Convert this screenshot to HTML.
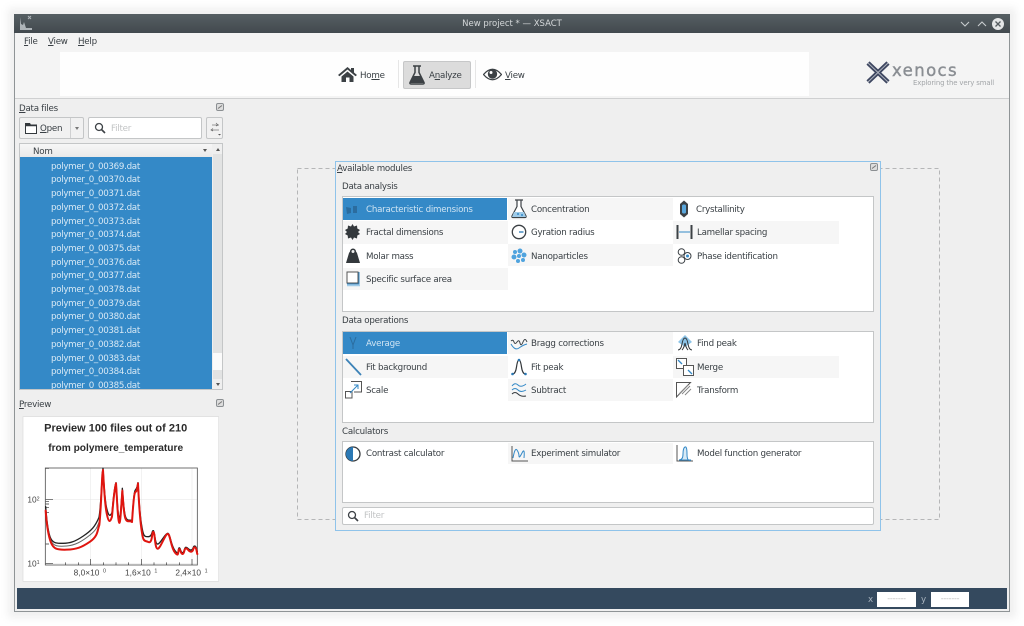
<!DOCTYPE html>
<html><head><meta charset="utf-8"><style>
html,body{margin:0;padding:0;background:#fff;width:1024px;height:626px;overflow:hidden}
#r{position:relative;width:1024px;height:626px;overflow:hidden;font-family:"DejaVu Sans",sans-serif;font-size:8.7px;letter-spacing:-.24px;color:#3a4045;filter:blur(.35px);background:#fff}
#r div,#r span.a,#r svg{position:absolute}
.t{white-space:nowrap;line-height:12px}
.row{background:#f6f6f6}
.sel{background:#3489c7}
.box{background:#fff;border:1px solid #c4c6c7;box-sizing:border-box}
.f{left:51px;color:#d8e9f5;white-space:nowrap;line-height:12px;letter-spacing:-.3px}
u{text-decoration-thickness:1px;text-underline-offset:1px}
</style></head><body><div id="r">
<div style="left:8px;top:8px;width:1008px;height:610px;background:rgba(0,0,0,.06);filter:blur(4px)"></div>
<div style="left:14px;top:14px;width:996px;height:598px;background:#efefef;border:1px solid #8f9496;box-sizing:border-box;border-top:0"></div>
<div style="left:14px;top:14px;width:996px;height:19px;background:linear-gradient(#565f63,#42494e)"></div>
<svg style="left:18px;top:15px" width="16" height="17" viewBox="0 0 16 17"><path d="M2 2v13h12v-2H8L6 7 5 10 3 9z" fill="#aeb4b8"/><path d="M10 4l3-3M10 1l3 3" stroke="#aeb4b8" fill="none"/></svg>
<div class="t" style="left:14px;width:996px;top:18px;text-align:center;color:#d5d8da;font-size:8.5px;letter-spacing:0">New project * — XSACT</div>
<svg style="left:958px;top:17px" width="48" height="14" viewBox="0 0 48 14"><path d="M3 5l4 4 4-4M20 9l4-4 4 4" stroke="#c8ccce" fill="none" stroke-width="1.1"/><circle cx="40" cy="7" r="6" fill="#e4e6e7"/><path d="M37.5 4.500l5 5m0-5l-5 5" stroke="#555c60" stroke-width="1.300"/></svg>
<div style="left:15px;top:33px;width:994px;height:17px;background:#f3f3f3"></div>
<div class="t" style="left:24px;top:36px"><u>F</u>ile</div>
<div class="t" style="left:48px;top:36px"><u>V</u>iew</div>
<div class="t" style="left:78px;top:36px"><u>H</u>elp</div>
<div style="left:15px;top:50px;width:994px;height:48px;background:#f4f4f4;border-bottom:1px solid #cfd0d1;box-sizing:content-box"></div>
<div style="left:60px;top:52px;width:749px;height:44px;background:#fefefe"></div>
<svg style="left:338px;top:66px" width="19" height="17" viewBox="0 0 19 17"><path d="M0 9L9.500 1 13 4V2h3v4.500L19 9l-1.500 1.200L9.500 3.500 1.500 10.200z M3.500 10.500l6-5 6 5V16h-4v-4.500H8V16H3.500z" fill="#3c4145"/></svg>
<div class="t" style="left:360px;top:70px">Ho<u>m</u>e</div>
<div style="left:398px;top:60px;width:1px;height:28px;background:#e6e6e6"></div>
<div style="left:403px;top:61px;width:68px;height:28px;background:#dcdcdc;border:1px solid #c6c7c8;border-radius:2px;box-sizing:border-box"></div>
<svg style="left:408px;top:65px" width="18" height="20" viewBox="0 0 18 20"><path d="M5 1h8M7 1.500v6L2 17.500q-.5 1.500 1 1.500h12q1.500 0 1-1.500L11 7.500v-6" fill="none" stroke="#3c4145" stroke-width="1.500"/><path d="M5 11h8l3 7H2z" fill="#3c4145"/></svg>
<div class="t" style="left:429px;top:70px">A<u>n</u>alyze</div>
<div style="left:475px;top:60px;width:1px;height:28px;background:#e6e6e6"></div>
<svg style="left:483px;top:67px" width="19" height="15" viewBox="0 0 19 15"><path d="M.5 7.500Q9.500-3 18.500 7.500 9.500 18 .5 7.500z" fill="#fff" stroke="#3c4145" stroke-width="1.300"/><circle cx="9.500" cy="7" r="4.700" fill="#3c4145"/><circle cx="8" cy="5.500" r="1.500" fill="#fff"/></svg>
<div class="t" style="left:505px;top:70px"><u>V</u>iew</div>
<svg style="left:866px;top:61px" width="24" height="23" viewBox="0 0 24 23"><path d="M2 2l20 19M22 2L2 21" stroke="#3d4660" stroke-width="4.500" fill="none"/><path d="M2 2l20 19M22 2L2 21" stroke="#aeb3bd" stroke-width="1" fill="none"/></svg>
<div class="t" style="left:892px;top:61px;font-size:16.500px;line-height:20px;color:#8a8e93;letter-spacing:1.400px;-webkit-text-stroke:.4px #8a8e93">xenocs</div>
<div class="t" style="left:913px;top:77px;font-size:6.900px;letter-spacing:-.12px;color:#a2a5a8">Exploring the very small</div>
<div class="t" style="left:19px;top:102.500px"><u>D</u>ata files</div>
<svg style="left:216px;top:103px" width="8" height="8" viewBox="0 0 8 8"><rect x=".5" y=".5" width="7" height="7" rx="1.500" fill="#ddd" stroke="#8b8f92"/><path d="M2 5.500l4-3" stroke="#777"/></svg>
<div class="box" style="left:19px;top:117px;width:65px;height:22px;border-radius:2px;background:#f1f1f1"></div>
<div style="left:70px;top:118px;width:1px;height:20px;background:#cfd0d1"></div>
<svg style="left:25px;top:122px" width="12" height="12" viewBox="0 0 12 12"><path d="M.5 1.500h4l1 1.500h6v8.500h-11z" fill="#fff" stroke="#33383c"/><path d="M.5 1h4.500l1 2h5.500v1.300H.5z" fill="#33383c"/></svg>
<div class="t" style="left:40px;top:122.500px"><u>O</u>pen</div>
<div style="left:75px;top:127px;border:2.500px solid transparent;border-top:3px solid #777"></div>
<div class="box" style="left:88px;top:117px;width:114px;height:22px;border-radius:2px"></div>
<svg style="left:94px;top:122px" width="12" height="12" viewBox="0 0 12 12"><circle cx="5" cy="5" r="3.500" fill="none" stroke="#3c4145" stroke-width="1.300"/><path d="M7.500 7.500l3.500 3.500" stroke="#3c4145" stroke-width="1.600"/></svg>
<div class="t" style="left:111px;top:122.500px;color:#c2c4c5">Filter</div>
<div class="box" style="left:206px;top:117px;width:17px;height:22px;border-radius:2px;background:#f1f1f1"></div>
<svg style="left:209px;top:122px" width="13" height="14" viewBox="0 0 13 14"><path d="M3 3h7M3 8h7" stroke="#999"/><path d="M7 1l2 2-2 1M4 6.500L2 8l2 1" stroke="#666" fill="none" stroke-width=".7"/><path d="M9 12h3l-1.500 1.500z" fill="#555"/></svg>
<div class="box" style="left:19px;top:143px;width:204px;height:247px;background:#efefef"></div>
<div style="left:20px;top:144px;width:192px;height:13px;background:linear-gradient(#f7f7f7,#e9e9e9)"></div>
<div class="t" style="left:33px;top:146px">Nom</div>
<div style="left:203px;top:149px;border:2.500px solid transparent;border-top:3px solid #555"></div>
<div style="left:216px;top:146px;border:2.500px solid transparent;border-bottom:3px solid #555"></div>
<div style="left:20px;top:157px;width:192px;height:232px;background:#3489c7;overflow:hidden"></div>
<div style="left:213px;top:154px;width:9px;height:199px;background:#e2e3e3"></div>
<div style="left:213px;top:353px;width:9px;height:17px;background:#fbfbfb"></div>
<div style="left:213px;top:370px;width:9px;height:9px;background:#e2e3e3"></div>
<div style="left:216px;top:383px;border:2.500px solid transparent;border-top:3px solid #555"></div>
<div class="f" style="top:160.700px">polymer_0_00369.dat</div>
<div class="f" style="top:174.400px">polymer_0_00370.dat</div>
<div class="f" style="top:188.100px">polymer_0_00371.dat</div>
<div class="f" style="top:201.800px">polymer_0_00372.dat</div>
<div class="f" style="top:215.500px">polymer_0_00373.dat</div>
<div class="f" style="top:229.200px">polymer_0_00374.dat</div>
<div class="f" style="top:242.900px">polymer_0_00375.dat</div>
<div class="f" style="top:256.600px">polymer_0_00376.dat</div>
<div class="f" style="top:270.300px">polymer_0_00377.dat</div>
<div class="f" style="top:284px">polymer_0_00378.dat</div>
<div class="f" style="top:297.700px">polymer_0_00379.dat</div>
<div class="f" style="top:311.400px">polymer_0_00380.dat</div>
<div class="f" style="top:325.100px">polymer_0_00381.dat</div>
<div class="f" style="top:338.800px">polymer_0_00382.dat</div>
<div class="f" style="top:352.500px">polymer_0_00383.dat</div>
<div class="f" style="top:366.200px">polymer_0_00384.dat</div>
<div style="left:51px;top:379.900px;width:150px;height:9px;overflow:hidden"><div class="t" style="left:0;top:0;color:#d8e9f5;letter-spacing:-.3px">polymer_0_00385.dat</div></div>
<div class="t" style="left:19px;top:398.500px"><u>P</u>review</div>
<svg style="left:216px;top:399px" width="8" height="8" viewBox="0 0 8 8"><rect x=".5" y=".5" width="7" height="7" rx="1.500" fill="#ddd" stroke="#8b8f92"/><path d="M2 5.500l4-3" stroke="#777"/></svg>
<svg style="left:0;top:360px" width="240" height="266" viewBox="0 0 720 798" style="letter-spacing:0">
<rect x="69" y="170" width="587" height="494" fill="#fff" stroke="#dcdcdc" stroke-width="2"/>
<text x="347" y="215" text-anchor="middle" font-family="Liberation Sans" font-weight="700" font-size="33" letter-spacing="0" fill="#2a2a2a">Preview 100 files out of 210</text>
<text x="347" y="273" text-anchor="middle" font-family="Liberation Sans" font-weight="700" font-size="30.500" letter-spacing="0" fill="#2a2a2a">from polymere_temperature</text>
<path d="M137 418H592M137 610H592M272 324V615M424 324V615M576 324V615" stroke="#e4e4e4" stroke-width="1.500" fill="none"/>
<rect x="136" y="324" width="456" height="291" fill="none" stroke="#555" stroke-width="2.500"/>
<path d="M137 418h22M137 425h10M137 432h10M137 442h10M137 457h10M137 552h10M137 325h10M137 610h22M197 615v-8M235 615v-8M272 615v-18M310 615v-8M348 615v-8M386 615v-8M424 615v-18M462 615v-8M500 615v-8M538 615v-8M576 615v-18" stroke="#333" stroke-width="2" fill="none"/>
<g fill="none" stroke-linejoin="round" stroke-linecap="round">
<path d="M137 440C140 480 145 520 152 535S170 550 190 550 225 545 250 528 285 500 297 472C301 450 304 400 307 340L309 325C312 370 314 420 320 445S330 470 336 458C340 420 342 385 348 368 351 400 352 450 356 468S362 460 367 385C370 420 371 450 376 468S390 478 396 482C399 440 401 400 405 392S410 390 414 368C417 420 418 450 424 490S432 530 445 530 455 510 460 512 464 550 472 552 495 520 503 520 512 555 525 572 533 568 537 564 542 580 548 578 552 562 558 562 566 572 574 570 578 558 584 558 590 570 592 575" stroke="#222" stroke-width="4"/>
<path d="M137 450C140 490 146 525 153 542S175 560 200 558 245 545 270 525 292 495 298 485" stroke="#666" stroke-width="3"/>
<path d="M137 452C140 495 146 530 153 548S170 570 200 569 245 562 270 545 292 510 298 495C302 460 304 400 307 345L309 330C312 380 314 430 320 460S330 488 336 470C340 425 342 392 348 370 351 410 352 460 356 482S362 470 367 392C370 430 371 460 376 475S390 480 396 486C399 445 401 405 405 398S410 400 414 370C417 430 418 460 424 505S432 540 445 546 455 515 460 516 464 562 472 566 495 522 503 522 512 562 525 578 533 572 537 568 542 584 548 582 552 565 558 565 566 577 574 575 578 562 584 562 590 578 592 582" stroke="#e0150f" stroke-width="6"/>
</g>
<g font-family="Liberation Sans" font-size="25" letter-spacing="0" fill="#444"><text x="82" y="428">10</text><text x="110" y="421" font-size="16">2</text><text x="82" y="619">10</text><text x="110" y="612" font-size="16">1</text><text x="221" y="646">8,0×10</text><text x="309" y="638" font-size="16">0</text><text x="375" y="646">1,6×10</text><text x="463" y="638" font-size="16">1</text><text x="526" y="646">2,4×10</text><text x="614" y="638" font-size="16">1</text></g>
</svg>
<svg style="left:297px;top:168px" width="643" height="352" viewBox="0 0 643 352"><rect x=".5" y=".5" width="642" height="351" fill="none" stroke="#b5b6b7" stroke-dasharray="4 3"/></svg>
<div style="left:335px;top:161px;width:546px;height:370px;background:#efefef;border:1px solid #8fc3ea;box-sizing:border-box"></div>
<div class="t" style="left:337px;top:162.500px"><u>A</u>vailable modules</div>
<svg style="left:870px;top:163px" width="8" height="8" viewBox="0 0 8 8"><rect x=".5" y=".5" width="7" height="7" rx="1.500" fill="#ddd" stroke="#8b8f92"/><path d="M2 5.500l4-3" stroke="#777"/></svg>
<div class="t" style="left:342px;top:181px">Data analysis</div>
<div class="box" style="left:342px;top:196px;width:532px;height:116px"></div>
<div class="t" style="left:342px;top:315px">Data operations</div>
<div class="box" style="left:342px;top:331px;width:532px;height:92px"></div>
<div class="t" style="left:342px;top:425.500px">Calculators</div>
<div class="box" style="left:342px;top:441px;width:532px;height:62px"></div>
<div class="box" style="left:342px;top:507px;width:532px;height:18px;border-radius:2px"></div>
<svg style="left:347px;top:510px" width="12" height="12" viewBox="0 0 12 12"><circle cx="5" cy="5" r="3.500" fill="none" stroke="#3c4145" stroke-width="1.300"/><path d="M7.500 7.500l3.500 3.500" stroke="#3c4145" stroke-width="1.600"/></svg>
<div class="t" style="left:364px;top:510px;color:#c2c4c5">Filter</div>
<div class="sel" style="left:343px;top:198px;width:164px;height:22px"></div>
<div class="row" style="left:508px;top:198px;width:165px;height:22px"></div>
<div class="row" style="left:343px;top:221px;width:165px;height:23px"></div>
<div class="row" style="left:673px;top:221px;width:166px;height:23px"></div>
<div class="row" style="left:508px;top:244px;width:165px;height:22px"></div>
<div class="row" style="left:343px;top:268px;width:165px;height:22px"></div>
<div class="sel" style="left:343px;top:332px;width:164px;height:22px"></div>
<div class="row" style="left:508px;top:332px;width:165px;height:22px"></div>
<div class="row" style="left:343px;top:356px;width:165px;height:22px"></div>
<div class="row" style="left:673px;top:356px;width:166px;height:22px"></div>
<div class="row" style="left:508px;top:379px;width:165px;height:22px"></div>
<div class="row" style="left:508px;top:443px;width:165px;height:21px"></div>
<div class="t" style="left:366px;top:203.500px;color:#cfe4f3">Characteristic dimensions</div>
<div class="t" style="left:531px;top:203.500px">Concentration</div>
<div class="t" style="left:696px;top:203.500px">Crystallinity</div>
<div class="t" style="left:366px;top:227px">Fractal dimensions</div>
<div class="t" style="left:531px;top:227px">Gyration radius</div>
<div class="t" style="left:697px;top:227px">Lamellar spacing</div>
<div class="t" style="left:366px;top:250.500px">Molar mass</div>
<div class="t" style="left:531px;top:250.500px">Nanoparticles</div>
<div class="t" style="left:697px;top:250.500px">Phase identification</div>
<div class="t" style="left:366px;top:273.500px">Specific surface area</div>
<div class="t" style="left:366px;top:338px;color:#cfe4f3">Average</div>
<div class="t" style="left:531px;top:338px">Bragg corrections</div>
<div class="t" style="left:697px;top:338px">Find peak</div>
<div class="t" style="left:366px;top:361.500px">Fit background</div>
<div class="t" style="left:531px;top:361.500px">Fit peak</div>
<div class="t" style="left:697px;top:361.500px">Merge</div>
<div class="t" style="left:366px;top:384.500px">Scale</div>
<div class="t" style="left:531px;top:384.500px">Subtract</div>
<div class="t" style="left:697px;top:384.500px">Transform</div>
<div class="t" style="left:366px;top:448px">Contrast calculator</div>
<div class="t" style="left:531px;top:448px">Experiment simulator</div>
<div class="t" style="left:697px;top:448px">Model function generator</div>
<svg style="left:344px;top:200px" width="16" height="18" viewBox="0 0 16 18"><path d="M2 7l5 1v5l-4 1zM9 6h4v7H9z" fill="#2b6c9e"/></svg>
<svg style="left:510px;top:199px" width="18" height="20" viewBox="0 0 18 20"><path d="M5 1h8M7 1.500v6L2 17q-.5 1.500 1 1.500h12q1.500 0 1-1.500L11 7.500v-6" fill="#fff" stroke="#3c4145" stroke-width="1.200"/><path d="M4 13h10l2 5H2z" fill="#9fcbe8"/><circle cx="8" cy="15" r="1" fill="#3489c7"/><circle cx="12" cy="16" r="1" fill="#3489c7"/></svg>
<svg style="left:678px;top:200px" width="12" height="18" viewBox="0 0 12 18"><path d="M6 .5L10 4v10l-4 3.500L2 14V4z" fill="#3c4145"/><rect x="4" y="4.500" width="4" height="9" rx="1.500" fill="#5aa7dc"/></svg>
<svg style="left:345px;top:224px" width="15" height="16" viewBox="0 0 15 16"><path d="M7.500 0l1.500 2.500L12 1.500l.3 3L15 6l-2 2 2 2-2.700 1.500-.3 3-3-1L7.500 16 6 13.500l-3 1-.3-3L0 10l2-2-2-2 2.700-1.500.3-3 3 1z" fill="#33383c"/></svg>
<svg style="left:511px;top:224px" width="16" height="16" viewBox="0 0 16 16"><circle cx="8" cy="8" r="6.700" fill="none" stroke="#3c4145" stroke-width="1.300"/><path d="M8 8h4.500" stroke="#2b79b5" stroke-width="1.300"/></svg>
<svg style="left:676px;top:224px" width="18" height="16" viewBox="0 0 18 16"><path d="M1.500 1v14M15.500 1v14" stroke="#3c4145" stroke-width="2"/><path d="M3 8h11" stroke="#3489c7"/></svg>
<svg style="left:346px;top:248px" width="14" height="15" viewBox="0 0 14 15"><path d="M4 3.500a3 3 0 0 1 6 0l1 1.500 3 10H0L3 5z" fill="#33383c"/><circle cx="7" cy="3.500" r="1.500" fill="#efefef"/></svg>
<svg style="left:511px;top:248px" width="16" height="16" viewBox="0 0 16 16" fill="#4fa3de"><circle cx="4" cy="4" r="2"/><circle cx="9" cy="3" r="2.500"/><circle cx="3" cy="9" r="2.500"/><circle cx="8" cy="8" r="2"/><circle cx="13" cy="7" r="2.500"/><circle cx="7" cy="13" r="2"/><circle cx="12" cy="12" r="2"/></svg>
<svg style="left:677px;top:248px" width="15" height="16" viewBox="0 0 15 16" fill="none" stroke="#3c4145"><circle cx="4.500" cy="4" r="3.300"/><circle cx="4.500" cy="12" r="3.300"/><circle cx="10.500" cy="8" r="3.500"/><circle cx="10.500" cy="8" r="1.500" fill="#3489c7" stroke="none"/></svg>
<svg style="left:346px;top:271px" width="15" height="16" viewBox="0 0 15 16"><rect x="1" y="1" width="11" height="11" fill="#fff" stroke="#555"/><path d="M13 1v12H1" stroke="#3489c7" fill="none"/><path d="M1 14.500h13" stroke="#9fcbe8" stroke-width="1.500"/></svg>
<svg style="left:349px;top:336px" width="8" height="14" viewBox="0 0 8 14"><path d="M1 1l3 8M7 1L4 9v4" stroke="#2b6c9e" fill="none"/></svg>
<svg style="left:510px;top:338px" width="18" height="12" viewBox="0 0 18 12"><path d="M1 3q2-2 3 1t3 0 3 1 3-1 4 0" fill="none" stroke="#3c4145"/><path d="M1 6q4 7 8 4t8-4" fill="none" stroke="#3489c7"/></svg>
<svg style="left:677px;top:335px" width="16" height="17" viewBox="0 0 16 17"><path d="M8 0l7 7-7 5-7-5z" fill="#8cc4e8"/><path d="M1 15q3 0 4-6t3-6 3 6 4 6M5 15q2-2 3-7 1 5 3 7" fill="none" stroke="#33383c"/></svg>
<svg style="left:345px;top:358px" width="17" height="18" viewBox="0 0 17 18"><path d="M1 1l15 16" stroke="#3d83b8" stroke-width="1.800"/></svg>
<svg style="left:511px;top:358px" width="16" height="18" viewBox="0 0 16 18"><path d="M1.500 16q3 0 4-7t2.500-7 2.500 7 4 7" fill="none" stroke="#33383c" stroke-width="1.200"/><circle cx="1.500" cy="16" r="1.300" fill="#2b79b5"/><circle cx="8" cy="2" r="1.300" fill="#2b79b5"/><circle cx="14.500" cy="16" r="1.300" fill="#2b79b5"/></svg>
<svg style="left:676px;top:358px" width="18" height="18" viewBox="0 0 18 18" fill="none" stroke="#555"><rect x=".5" y=".5" width="10" height="10" fill="#fff"/><rect x="7.500" y="7.500" width="10" height="10" fill="#fff"/><path d="M2 2l4 4M16 16l-4-4" stroke="#3489c7" stroke-width="1.300"/></svg>
<svg style="left:345px;top:381px" width="17" height="18" viewBox="0 0 17 18" fill="none"><path d="M6 .5h10.500V11H9" stroke="#555"/><rect x=".5" y="10.500" width="6.500" height="6.500" stroke="#555"/><path d="M5 12l8-8M9 4h4v4" stroke="#3489c7"/></svg>
<svg style="left:511px;top:382px" width="16" height="16" viewBox="0 0 16 16" fill="none"><path d="M1 4q3-4 6-1t8-1M1 8q3-3 6 0t8 0" stroke="#3489c7"/><path d="M1 12q3-3 6 0t8 2" stroke="#33383c"/></svg>
<svg style="left:676px;top:382px" width="16" height="16" viewBox="0 0 16 16" fill="none" stroke="#555"><path d="M.5.500h14L.5 15z"/><path d="M3 12L12 3M6 12l8-8M9 13l6-6" stroke="#888"/></svg>
<svg style="left:345px;top:446px" width="16" height="16" viewBox="0 0 16 16"><circle cx="8" cy="8" r="7" fill="#fff" stroke="#33383c" stroke-width="1.300"/><path d="M8 1a7 7 0 0 1 0 14z" fill="#2b79b5" transform="matrix(-1 0 0 1 16 0)"/></svg>
<svg style="left:511px;top:446px" width="17" height="17" viewBox="0 0 17 17" fill="none"><path d="M1 0v15h16" stroke="#555"/><path d="M2 12q2-11 4-8t2 6 3-3 2 5" stroke="#3489c7"/></svg>
<svg style="left:676px;top:445px" width="17" height="17" viewBox="0 0 17 17" fill="none"><path d="M1 0v16h16" stroke="#555"/><path d="M3 15q4 0 4-6t2-7 2 7 4 6z" stroke="#3489c7" fill="#d7eaf6"/></svg>
<div style="left:17px;top:588px;width:990px;height:21px;background:#34495e"></div>
<div class="t" style="left:868px;top:594px;color:#a9b4bf">x</div>
<div style="left:877px;top:592px;width:39px;height:15px;background:#fff;color:#bbb;font-size:8px;line-height:14px;text-align:center">-------</div>
<div class="t" style="left:921px;top:594px;color:#a9b4bf">y</div>
<div style="left:931px;top:592px;width:38px;height:15px;background:#fff;color:#bbb;font-size:8px;line-height:14px;text-align:center">-------</div>
</div></body></html>
